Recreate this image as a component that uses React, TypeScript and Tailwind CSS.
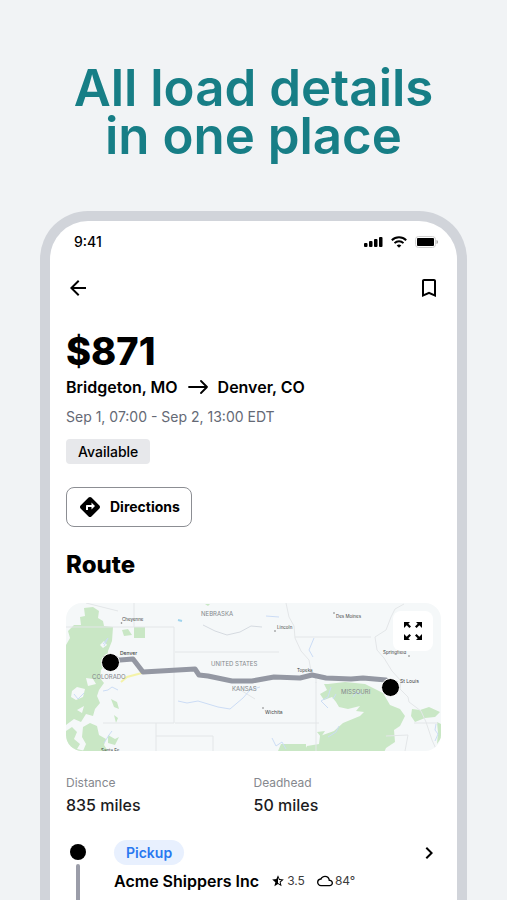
import type { ReactNode } from 'react';
import {
  MdArrowBack,
  MdBookmarkBorder,
  MdChevronRight,
  MdCloudQueue,
  MdDirections,
  MdStarHalf,
} from 'react-icons/md';

const STATS = [
  { label: 'Distance', value: '835 miles' },
  { label: 'Deadhead', value: '50 miles' },
];

function StatusBar() {
  return (
    <div className="flex h-[42px] items-center justify-between pl-2 pr-[3px]">
      <span className="text-sm font-medium">9:41</span>
      <div className="flex items-center gap-2">
        <svg width="19" height="12" viewBox="0 0 19 12" aria-hidden="true">
          <rect x="0" y="7" width="3.500" height="4" rx="1" />
          <rect x="5" y="5" width="3.500" height="6" rx="1" />
          <rect x="10" y="3" width="3.500" height="8" rx="1" />
          <rect x="15" y="1" width="3.500" height="10" rx="1" />
        </svg>
        <svg width="16" height="12" viewBox="0 0 16 12" fill="none" stroke="#000" strokeWidth="2" aria-hidden="true">
          <path d="M.8 4.3a10.3 10.3 0 0 1 14.4 0" />
          <path d="M3.5 7.1a6.4 6.4 0 0 1 9 0" />
          <path d="M8 11.8 5.7 9.5a3.3 3.3 0 0 1 4.6 0z" fill="#000" stroke="none" />
        </svg>
        <svg width="23" height="12" viewBox="0 0 23 12" aria-hidden="true">
          <rect x=".5" y=".5" width="20" height="11" rx="3" fill="none" stroke="#d0d0d0" />
          <rect x="2" y="2" width="17" height="8" rx="1" />
          <path d="M21.500 4v4c1-.4 1.500-1.100 1.500-2s-.5-1.600-1.500-2z" fill="#aaa" />
        </svg>
      </div>
    </div>
  );
}

function ExpandIcon() {
  return (
    <svg width="20" height="20" viewBox="0 0 20 20" aria-hidden="true">
      <path d="M1 1h6L5.300 2.700 8 5.400 6.400 7 3.700 4.300 1 7z" />
      <path d="M19 1h-6l1.700 1.700L12 5.400 13.600 7l2.700-2.700L19 7z" />
      <path d="M1 19h6l-1.700-1.700L8 14.600 6.400 13l-2.700 2.700L1 13z" />
      <path d="M19 19h-6l1.700-1.700-2.700-2.700 1.600-1.600 2.700 2.700L19 13z" />
    </svg>
  );
}

function RouteMap() {
  return (
    <svg
      className="h-full w-full"
      viewBox="0 0 375 148"
      preserveAspectRatio="xMidYMid slice"
      role="img"
      aria-label="Route from Denver to St Louis"
    >
      <rect width="375" height="148" fill="#f5f8f9" />

      {/* forests */}
      <g fill="#c9e7c5">
        <path d="M18 5 27 4 33 8 32 15 37 18 38 23 47 24 46 38 42 48 41 60 35 67 34 75 38 80 33 87 31 93 34 100 29 106 27 113 20 111 15 119 8 116 0 122 0 42 4 35 2 28 8 22 15 22 14 14 19 13z" />
        <path d="M17 124 24 120 31 123 33 132 40 136 38 142 42 148 17 148 20 141 16 134zM0 128l6-4 5 5-3 7 6 5-3 5 8 2H0zM42 132l7 4 4-2-4 8-7-2z" />
        <path d="M68 24h11v11H68zM56 27l6-1 4 6-8 1zM45 96l6 3 2 7-5-2zM48 112l4 3-2 5z" />
        <path d="m262 81 17-2 20 2 18 9 7 12 10 4 5 7-5 10-6 4 1 12-9 6-3 7H236l5-9 12-2 1-8 14-5 9-8 17-7 4-4-8-1 4-5-12 3-9-2-3-5-4-5-8 3-4-6 7-4-3-6z" />
        <path d="m251 129 8-1-4 6zM346 106l8 1 9-3 11 5-5 5-10 1-10 4-4-6zM371 119l4 2v14l-4 6 1-11z" />
        <path d="M139 1h5l-2 2zM215 141h25v7h-28z" />
      </g>
      <g fill="#f5f8f9">
        <path d="m6 88 5-4 8 2-2 8-7 3-5-3zM34 42l4-4 3 4-4 3zM20 75l7 1 3 5-8 2zM11 107l7-4-2 7z" />
      </g>

      {/* state borders */}
      <g fill="none" stroke="#e3e6e8" strokeWidth="1">
        <path d="M0 24h108v96H37M68 0v24M109 49h104M109 120h144M90 120v28M90 133h57v15M229 34h76M250 79v69" />
        <path d="m220 0 3 14 5 9 1 12 6 13 8 9 2 11 5 8v4" />
        <path d="m338 1-9 5-4 8-5 13-11 7 2 13 7 8 8 13 9 10-1 8 8 8 1 5 12 9 5 11 6 18 4 9" />
        <path d="m320 133 22-1-3 16M348 120h24" />
        <path d="m168 83 21 13M20 0l32 8" />
      </g>

      {/* rivers */}
      <g fill="none" stroke="#cbdcf5" strokeWidth="1">
        <path d="m112 98 9 2 11-2 20 6 12 2 13-11 7-8 10-3M37 88l5-1 4-3 6 3M38 140l5-8 3-4M200 13l13 1M248 35l-5 12 4 7M37 41l5-6-4 8M8 91l4 5 6-6M265 84l-3 10-7 4 7 7M206 135l4 8 6-4 4 7M370 121l-1 6 3 4-3 7" />
        <path d="m296 92-6-3-3 5M270 91l-3 5M262 134l8-5 3-6" />
      </g>
      <path d="m137 22 12 6 12 4 13-3 11-6 11 1" fill="none" stroke="#d5dae0" />
      <path d="m55 79 6-5 15-4" fill="none" stroke="#f4f3a9" strokeWidth="2" />
      <path d="m112 17 4 1" stroke="#9fd3ed" strokeWidth="2" />

      <g fill="#81868a" fontSize="6">
        <text x="135" y="13">NEBRASKA</text>
        <text x="145" y="63">UNITED STATES</text>
        <text x="166" y="88">KANSAS</text>
        <text x="26" y="76">COLORADO</text>
        <text x="275" y="91">MISSOURI</text>
      </g>
      <g fill="#3c3f42" fontSize="4.500">
        <text x="56" y="18">Cheyenne</text>
        <text x="211" y="26">Lincoln</text>
        <text x="270" y="15">Des Moines</text>
        <text x="317" y="51">Springfield</text>
        <text x="231" y="69">Topeka</text>
        <text x="35" y="149">Santa Fe</text>
        <text x="54" y="52" fontSize="5" fontWeight="500">Denver</text>
        <text x="334" y="80" fontSize="5">St Louis</text>
        <text x="199" y="111" fontSize="5">Wichita</text>
      </g>
      <g fill="#777">
        <circle cx="55.500" cy="20" r=".8" />
        <circle cx="209" cy="28" r=".8" />
        <circle cx="268" cy="10" r=".8" />
        <circle cx="343" cy="53" r=".8" />
        <circle cx="197" cy="105" r=".8" />
      </g>

      <path
        d="m44 57 10 0 13-1 10 13 52-3 4 6 9 1 24 5h20l22-4 26 1 12-3 14 3 25 1 12-1 23 2 6 6"
        fill="none"
        stroke="#9498a3"
        strokeWidth="5"
        strokeLinejoin="round"
      />
      <circle cx="44.500" cy="59.500" r="9" stroke="#fff" />
      <circle cx="324.500" cy="84.500" r="9" stroke="#fff" />
    </svg>
  );
}

function Badge({ children }: { children: ReactNode }) {
  return (
    <span className="inline-flex h-[25px] items-center rounded-sm bg-[#e7e8eb] px-3 text-sm font-medium">
      {children}
    </span>
  );
}

export default function App() {
  return (
    <main className="flex h-screen flex-col overflow-hidden bg-[#f1f3f5] px-10 pt-16 font-['Inter',sans-serif] text-black">
      <h1 className="text-center text-[51px] leading-[48px] font-semibold text-[#177e86]">
        All load details
        <br />
        in one place
      </h1>

      <div className="mt-[51px] min-h-0 flex-1 overflow-hidden rounded-t-[48px] border-x-10 border-t-10 border-[#d1d4da] bg-white px-4">
        <StatusBar />

        <header className="flex h-[50px] items-center justify-between">
          <button aria-label="Back">
            <MdArrowBack size={24} />
          </button>
          <button aria-label="Save load">
            <MdBookmarkBorder size={24} />
          </button>
        </header>

        <p className="mt-[18px] text-[38px] leading-10 font-extrabold">$871</p>
        <div className="mt-1 flex h-6 items-center gap-2.5 text-base font-semibold">
          <span>Bridgeton, MO</span>
          <svg width="20" height="14" viewBox="0 0 20 14" fill="none" stroke="#000" strokeWidth="1.800" strokeLinecap="round" strokeLinejoin="round" aria-label="to">
            <path d="M1 7h18M13 1l6 6-6 6" />
          </svg>
          <span>Denver, CO</span>
        </div>
        <p className="mt-2 text-sm leading-5 text-[#646975]">Sep 1, 07:00 - Sep 2, 13:00 EDT</p>
        <div className="mt-3 flex">
          <Badge>Available</Badge>
        </div>

        <button className="mt-[23px] flex h-10 items-center gap-2 rounded-lg border border-[#8c8e93] px-[11px] text-sm font-bold">
          <MdDirections size={24} />
          Directions
        </button>

        <h2 className="mt-[22px] text-2xl leading-8 font-extrabold">Route</h2>
        <div className="relative mt-[22px] h-[148px] overflow-hidden rounded-2xl">
          <RouteMap />
          <button
            aria-label="Expand map"
            className="absolute top-2 right-2 flex size-10 items-center justify-center rounded-lg bg-white"
          >
            <ExpandIcon />
          </button>
        </div>

        <dl className="mt-6 grid grid-cols-2">
          {STATS.map((s) => (
            <div key={s.label}>
              <dt className="text-xs leading-4 text-[#85888e]">{s.label}</dt>
              <dd className="mt-0.5 text-base leading-6 font-medium text-[#1c1c1e]">{s.value}</dd>
            </div>
          ))}
        </dl>

        <section className="mt-[23px] flex gap-7">
          <div className="flex w-5 flex-col items-center gap-1 pt-1 pl-1">
            <span className="size-4 shrink-0 rounded-full bg-black" />
            <span className="h-24 w-1 rounded-full bg-[#9b9da9]" />
          </div>
          <div className="flex-1">
            <div className="flex items-center justify-between">
              <span className="flex h-[25px] items-center rounded-full bg-[#e8f0fe] px-3 text-sm font-semibold text-[#2878f0]">
                Pickup
              </span>
              <button aria-label="Pickup details">
                <MdChevronRight size={24} />
              </button>
            </div>
            <div className="mt-1 flex h-6 items-center gap-3">
              <h3 className="text-base font-semibold">Acme Shippers Inc</h3>
              <span className="flex items-center gap-0.5 text-xs text-[#3c3c3c]">
                <MdStarHalf size={14} color="#000" />
                3.5
              </span>
              <span className="flex items-center gap-0.5 text-xs text-[#3c3c3c]">
                <MdCloudQueue size={16} color="#000" />
                84°
              </span>
            </div>
          </div>
        </section>
      </div>
    </main>
  );
}
